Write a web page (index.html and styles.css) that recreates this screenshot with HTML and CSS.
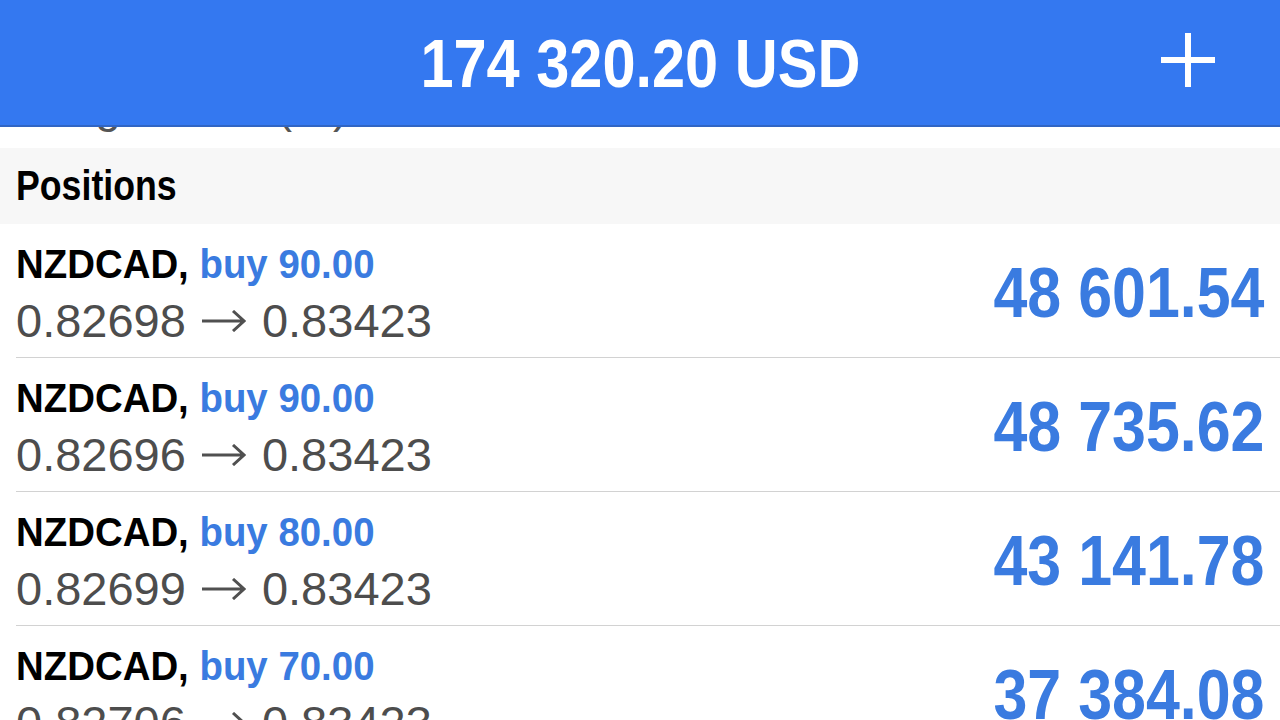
FILE: index.html
```html
<!DOCTYPE html>
<html lang="en">
<head>
<meta charset="UTF-8">
<title>Trade</title>
<link rel="stylesheet" href="styles.css">
</head>
<body>

<div class="screen">
    <div class="topbar">
        <div class="balance">174 320.20 USD</div>
        <div class="add-btn">
            <svg width="56" height="56" viewBox="0 0 56 56">
                <path d="M28 1 V55 M1 28 H55" stroke="#fff" stroke-width="6" fill="none"/>
            </svg>
        </div>
    </div>

    <div class="content">
        <div class="summary-row">
            <span class="summary-label">Margin level (%)</span>
        </div>

        <div class="section-head"><span class="section-title">Positions</span></div>

        <div class="position">
            <div class="pos-info">
                <div class="pos-title">NZDCAD, <span class="side">buy 90.00</span></div>
                <div class="pos-prices">0.82698<svg class="arrow" width="44" height="22" viewBox="0 0 44 22"><path d="M0 11 H42 M31 1 L42 11 L31 21" stroke="#505050" stroke-width="3" fill="none"/></svg>0.83423</div>
            </div>
            <div class="pos-profit">48 601.54</div>
        </div>

        <div class="position">
            <div class="pos-info">
                <div class="pos-title">NZDCAD, <span class="side">buy 90.00</span></div>
                <div class="pos-prices">0.82696<svg class="arrow" width="44" height="22" viewBox="0 0 44 22"><path d="M0 11 H42 M31 1 L42 11 L31 21" stroke="#505050" stroke-width="3" fill="none"/></svg>0.83423</div>
            </div>
            <div class="pos-profit">48 735.62</div>
        </div>

        <div class="position">
            <div class="pos-info">
                <div class="pos-title">NZDCAD, <span class="side">buy 80.00</span></div>
                <div class="pos-prices">0.82699<svg class="arrow" width="44" height="22" viewBox="0 0 44 22"><path d="M0 11 H42 M31 1 L42 11 L31 21" stroke="#505050" stroke-width="3" fill="none"/></svg>0.83423</div>
            </div>
            <div class="pos-profit">43 141.78</div>
        </div>

        <div class="position">
            <div class="pos-info">
                <div class="pos-title">NZDCAD, <span class="side">buy 70.00</span></div>
                <div class="pos-prices">0.82706<svg class="arrow" width="44" height="22" viewBox="0 0 44 22"><path d="M0 11 H42 M31 1 L42 11 L31 21" stroke="#505050" stroke-width="3" fill="none"/></svg>0.83423</div>
            </div>
            <div class="pos-profit">37 384.08</div>
        </div>
    </div>
</div>

</body>
</html>
```

FILE: styles.css
```css
body {
    margin: 0;
    padding: 0;
    background-color: #fff;
    font-family: "Liberation Sans", Arial, sans-serif;
}

.screen {
    position: relative;
    width: 1280px;
    height: 720px;
    overflow: hidden;
}

/* header sits over the scrolled list */
.topbar {
    position: absolute;
    top: 0;
    left: 0;
    right: 0;
    height: 125px;
    background-color: #3478f0;
    border-bottom: 2px solid #3065c4;
    display: flex;
    align-items: center;
    justify-content: center;
    z-index: 2;
}

/* condensed look: Arial bold squeezed horizontally */
.balance {
    font-weight: bold;
    font-size: 68px;
    color: #fff;
    margin-top: 1px;
    transform: scaleX(0.875);
}

.add-btn {
    position: absolute;
    right: 64px;
    top: 32px;
    width: 56px;
    height: 56px;
}

.summary-row {
    height: 148px;
    box-sizing: border-box;
    display: flex;
    align-items: flex-end;
    padding: 0 16px 15px;
}

.summary-label {
    font-size: 46px;
    color: #555;
}

.section-head {
    height: 76px;
    box-sizing: border-box;
    background-color: #f7f7f7;
    display: flex;
    align-items: center;
    padding: 0 16px;
}

.section-title {
    font-weight: bold;
    font-size: 42px;
    color: #000;
    transform: scaleX(0.85);
    transform-origin: left center;
}

.position {
    height: 134px;
    box-sizing: border-box;
    margin-left: 16px;
    padding-right: 16px;
    border-bottom: 1px solid #d2d2d2;
    display: flex;
    justify-content: space-between;
    align-items: center;
}

.pos-info {
    align-self: flex-start;
    padding-top: 16px;
}

.pos-title {
    font-weight: bold;
    font-size: 40px;
    line-height: 48px;
    color: #000;
    transform: scaleX(0.96);
    transform-origin: left center;
}

.side {
    color: #3a7be0;
}

.pos-prices {
    font-size: 47px;
    line-height: 66px;
    color: #4d4d4d;
    white-space: nowrap;
}

.arrow {
    margin: 0 16px;
    vertical-align: 5px;
}

.pos-profit {
    font-weight: bold;
    font-size: 70px;
    color: #3a7be0;
    margin-top: 4px;
    transform: scaleX(0.87);
    transform-origin: right center;
}
```
